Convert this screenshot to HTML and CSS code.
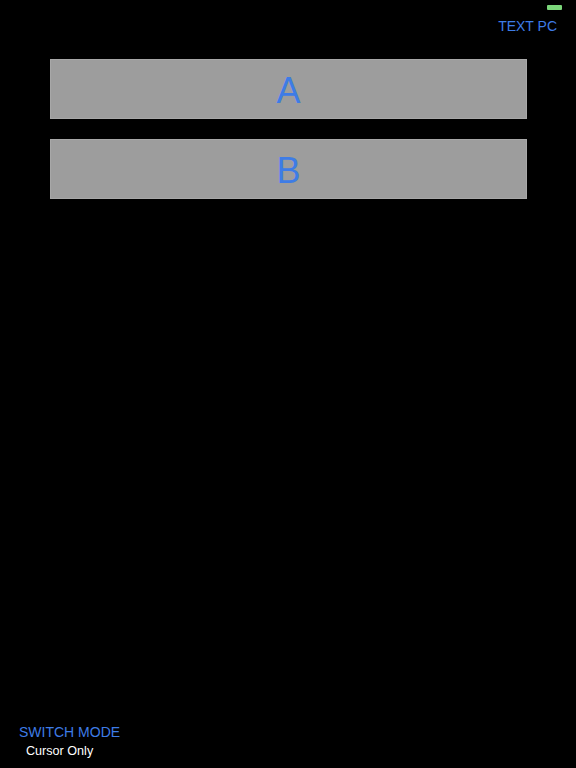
FILE: index.html
```html
<!DOCTYPE html>
<html>
<head>
<meta charset="utf-8">
<link rel="stylesheet" href="styles.css">
</head>
<body>
<div class="screen">
  <div class="battery"></div>
  <header class="topbar">
    <span class="link">TEXT PC</span>
  </header>
  <main class="buttons">
    <div class="key">A</div>
    <div class="key">B</div>
  </main>
  <footer class="footer">
    <div class="link">SWITCH MODE</div>
    <div class="mode">Cursor Only</div>
  </footer>
</div>
</body>
</html>
```
FILE: styles.css
```css
html, body {
  margin: 0;
  padding: 0;
  background: #000;
}
.screen {
  position: relative;
  height: 768px;
  display: flex;
  flex-direction: column;
  font-family: "Liberation Sans", Arial, sans-serif;
  color: #fff;
}
.battery {
  position: absolute;
  top: 5px;
  left: 547px;
  width: 15px;
  height: 5px;
  background: #7bd67a;
  border-radius: 1px;
}
.topbar {
  display: flex;
  justify-content: flex-end;
  padding: 18px 19px 0 0;
  height: 41px;
}
.link {
  color: #3e7ce6;
  font-size: 14px;
  line-height: 17px;
}
.buttons {
  flex: 1;
  display: flex;
  flex-direction: column;
  gap: 20px;
  padding-left: 50px;
}
.key {
  box-sizing: border-box;
  width: 477px;
  height: 60px;
  padding-top: 3px;
  background: #9d9d9d;
  border: 1px solid #a8a8a8;
  color: #3e7ce6;
  font-size: 36px;
  display: flex;
  align-items: center;
  justify-content: center;
  line-height: 1;
}
.footer {
  padding: 0 0 9px 19px;
}
.mode {
  font-size: 12.6px;
  line-height: 16px;
  padding-left: 7px;
  margin-top: 2px;
}
```
